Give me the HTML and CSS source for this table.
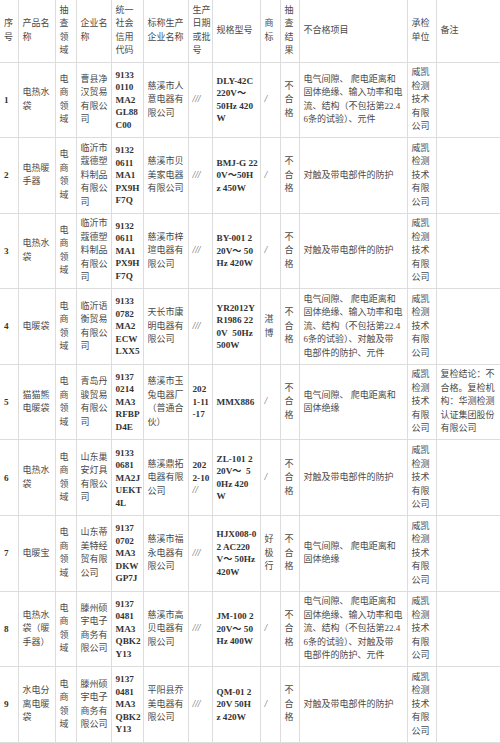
FILE: index.html
```html
<!DOCTYPE html>
<html lang="zh-CN">
<head>
<meta charset="utf-8">
<title>不合格产品名单</title>
<link rel="stylesheet" href="styles.css">
</head>
<body>
<table class="sheet">
<colgroup>
<col class="w-no"><col class="w-name"><col class="w-field"><col class="w-corp"><col class="w-code"><col class="w-maker"><col class="w-date"><col class="w-spec"><col class="w-brand"><col class="w-res"><col class="w-item"><col class="w-lab"><col class="w-note">
</colgroup>
<tr class="head">
<td>序<br>号</td><td>产品名<br>称</td><td>抽<br>查<br>领<br>域</td><td>企业名<br>称</td><td>统一<br>社会<br>信用<br>代码</td><td>标称生产<br>企业名称</td><td>生产<br>日期<br>或批<br>号</td><td>规格型号</td><td>商<br>标</td><td>抽<br>查<br>结<br>果</td><td>不合格项目</td><td>承检<br>单位</td><td>备注</td>
</tr>
<tr class="row">
<td class="lat">1</td><td>电热水<br>袋</td><td>电<br>商<br>领<br>域</td><td>曹县净<br>汉贸易<br>有限公<br>司</td><td class="lat">9133<br>0110<br>MA2<br>GL88<br>C00</td><td>慈溪市人<br>意电器有<br>限公司</td><td class="sl">///</td><td class="lat">DLY-42C<br>220V～<br>50Hz 420<br>W</td><td class="sl">/</td><td>不<br>合<br>格</td><td>电气间隙、 爬电距离和<br>固体绝缘、输入功率和电<br>流、结构（不包括第22.4<br>6条的试验）、元件</td><td>威凯<br>检测<br>技术<br>有限<br>公司</td><td></td>
</tr>
<tr class="row">
<td class="lat">2</td><td>电热暖<br>手器</td><td>电<br>商<br>领<br>域</td><td>临沂市<br>蔻德塑<br>料制品<br>有限公<br>司</td><td class="lat">9132<br>0611<br>MA1<br>PX9H<br>F7Q</td><td>慈溪市贝<br>美家电器<br>有限公司</td><td class="sl">///</td><td class="lat">BMJ-G 22<br>0V～50H<br>z 450W</td><td class="sl">/</td><td>不<br>合<br>格</td><td>对触及带电部件的防护</td><td>威凯<br>检测<br>技术<br>有限<br>公司</td><td></td>
</tr>
<tr class="row">
<td class="lat">3</td><td>电热水<br>袋</td><td>电<br>商<br>领<br>域</td><td>临沂市<br>蔻德塑<br>料制品<br>有限公<br>司</td><td class="lat">9132<br>0611<br>MA1<br>PX9H<br>F7Q</td><td>慈溪市梓<br>瑄电器有<br>限公司</td><td class="sl">///</td><td class="lat">BY-001 2<br>20V～ 50<br>Hz 420W</td><td class="sl">/</td><td>不<br>合<br>格</td><td>对触及带电部件的防护</td><td>威凯<br>检测<br>技术<br>有限<br>公司</td><td></td>
</tr>
<tr class="row">
<td class="lat">4</td><td>电暖袋</td><td>电<br>商<br>领<br>域</td><td>临沂语<br>衡贸易<br>有限公<br>司</td><td class="lat">9133<br>0782<br>MA2<br>ECW<br>LXX5</td><td>天长市康<br>明电器有<br>限公司</td><td class="sl">///</td><td class="lat">YR2012Y<br>R1986 22<br>0V&nbsp; 50Hz<br>500W</td><td>湛<br>博</td><td>不<br>合<br>格</td><td>电气间隙、 爬电距离和<br>固体绝缘、输入功率和电<br>流、结构（不包括第22.4<br>6条的试验）、对触及带<br>电部件的防护、元件</td><td>威凯<br>检测<br>技术<br>有限<br>公司</td><td></td>
</tr>
<tr class="row">
<td class="lat">5</td><td>猫猫熊<br>电暖袋</td><td>电<br>商<br>领<br>域</td><td>青岛丹<br>骏贸易<br>有限公<br>司</td><td class="lat">9137<br>0214<br>MA3<br>RFBP<br>D4E</td><td>慈溪市玉<br>兔电器厂<br>（普通合<br>伙）</td><td class="lat">202<br>1-11<br>-17</td><td class="lat">MMX886</td><td class="sl">/</td><td>不<br>合<br>格</td><td>电气间隙、 爬电距离和<br>固体绝缘</td><td>威凯<br>检测<br>技术<br>有限<br>公司</td><td>复检结论：不<br>合格。复检机<br>构：华测检测<br>认证集团股份<br>有限公司</td>
</tr>
<tr class="row">
<td class="lat">6</td><td>电热水<br>袋</td><td>电<br>商<br>领<br>域</td><td>山东巢<br>安灯具<br>有限公<br>司</td><td class="lat">9133<br>0681<br>MA2J<br>UEKT<br>4L</td><td>慈溪鼎拓<br>电器有限<br>公司</td><td class="lat">202<br>2-10<br><span class="slash">//</span></td><td class="lat">ZL-101 2<br>20V～&nbsp; 5<br>0Hz 420<br>W</td><td class="sl">/</td><td>不<br>合<br>格</td><td>对触及带电部件的防护</td><td>威凯<br>检测<br>技术<br>有限<br>公司</td><td></td>
</tr>
<tr class="row">
<td class="lat">7</td><td>电暖宝</td><td>电<br>商<br>领<br>域</td><td>山东蒂<br>美特经<br>贸有限<br>公司</td><td class="lat">9137<br>0702<br>MA3<br>DKW<br>GP7J</td><td>慈溪市福<br>永电器有<br>限公司</td><td class="sl">///</td><td class="lat">HJX008-0<br>2 AC220<br>V～ 50Hz<br>420W</td><td>好<br>极<br>行</td><td>不<br>合<br>格</td><td>电气间隙、 爬电距离和<br>固体绝缘</td><td>威凯<br>检测<br>技术<br>有限<br>公司</td><td></td>
</tr>
<tr class="row">
<td class="lat">8</td><td>电热水<br>袋（暖<br>手器）</td><td>电<br>商<br>领<br>域</td><td>滕州硕<br>宇电子<br>商务有<br>限公司</td><td class="lat">9137<br>0481<br>MA3<br>QBK2<br>Y13</td><td>慈溪市高<br>贝电器有<br>限公司</td><td class="sl">///</td><td class="lat">JM-100 2<br>20V～ 50<br>Hz 400W</td><td class="sl">/</td><td>不<br>合<br>格</td><td>电气间隙、 爬电距离和<br>固体绝缘、输入功率和电<br>流、结构（不包括第22.4<br>6条的试验）、对触及带<br>电部件的防护、元件</td><td>威凯<br>检测<br>技术<br>有限<br>公司</td><td></td>
</tr>
<tr class="row">
<td class="lat">9</td><td>水电分<br>离电暖<br>袋</td><td>电<br>商<br>领<br>域</td><td>滕州硕<br>宇电子<br>商务有<br>限公司</td><td class="lat">9137<br>0481<br>MA3<br>QBK2<br>Y13</td><td>平阳县乔<br>美电器有<br>限公司</td><td class="sl">///</td><td class="lat">QM-01 2<br>20V 50H<br>z 420W</td><td class="sl">/</td><td>不<br>合<br>格</td><td>对触及带电部件的防护</td><td>威凯<br>检测<br>技术<br>有限<br>公司</td><td></td>
</tr>
</table>
</body>
</html>
```

FILE: styles.css
```css
html, body {
  margin: 0;
  padding: 0;
  background: #ffffff;
}
body {
  width: 500px;
  overflow: hidden;
}
.sheet {
  border-collapse: collapse;
  table-layout: fixed;
  width: 500px;
  font-family: "Liberation Serif", "Noto Sans CJK SC", serif;
  font-size: 9px;
  line-height: 13.5px;
  color: #4a4a4a;
}
.w-no { width: 18px; }
.w-name { width: 37px; }
.w-field { width: 21px; }
.w-corp { width: 35px; }
.w-code { width: 32px; }
.w-maker { width: 45px; }
.w-date { width: 24px; }
.w-spec { width: 48px; }
.w-brand { width: 20px; }
.w-res { width: 19px; }
.w-item { width: 108px; }
.w-lab { width: 29px; }
.w-note { width: 64px; }
.sheet td {
  border: 1px solid #dddddd;
  padding: 0 1px 0 4px;
  vertical-align: middle;
  white-space: nowrap;
  overflow: hidden;
}
.sheet td:first-child { border-left: none; }
.sheet td:last-child { border-right: none; }
.sheet tr:first-child td { border-top: none; }
.head { height: 62px; }
.row { height: 75.6px; }
.lat {
  font-weight: bold;
  font-size: 9.2px;
  line-height: 12.5px;
  color: #333333;
  padding-left: 3px;
}
.sl, .slash {
  font-size: 9.5px;
  font-style: italic;
  color: #555555;
  font-weight: normal;
}
```
